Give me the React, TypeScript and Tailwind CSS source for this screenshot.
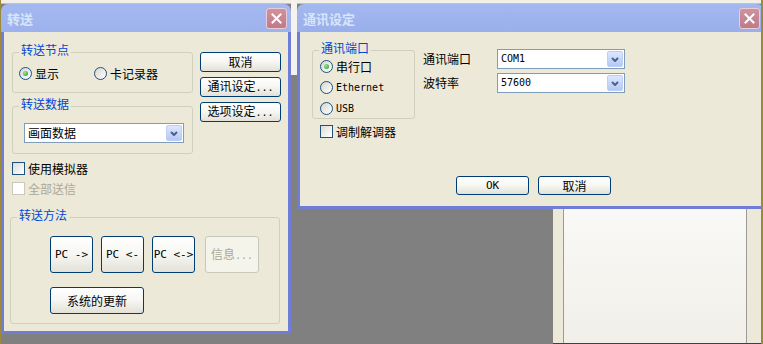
import React from "react";

const MONO = "font-[family-name:'DejaVu_Sans_Mono',monospace]";

function CloseBtn() {
  return (
    <div className="flex h-[21px] w-[21px] items-center justify-center rounded-[3px] border border-[#E9CDD6] bg-gradient-to-b from-[#D0929E] to-[#BF7A88]">
      <svg width="11" height="11" viewBox="0 0 11 11">
        <path d="M1.5 1.5 L9.5 9.5 M9.5 1.5 L1.5 9.5" stroke="white" strokeWidth="2" strokeLinecap="square" />
      </svg>
    </div>
  );
}

function Win({ title, className, children }: { title: string; className: string; children: React.ReactNode }) {
  return (
    <div className={`absolute flex flex-col overflow-hidden rounded-t-[7px] bg-gradient-to-b from-[#A4B8F0] via-[#7C97E1] to-[#7B97E1] ${className}`}>
      <div className="flex h-[28px] shrink-0 items-center justify-between pl-[6px] pr-[4px]">
        <span className="text-[13px] font-bold leading-[13px] text-[#D8E4F8]">{title}</span>
        <CloseBtn />
      </div>
      <div className="flex-1 border-x-[3px] border-b-[3px] border-[#6F7CD8] bg-[#ECE9D8]">{children}</div>
    </div>
  );
}

function Group({ label, className, children }: { label: string; className: string; children?: React.ReactNode }) {
  return (
    <div className={`relative rounded-[3px] border border-[#D0D0BF] ${className}`}>
      <span className="absolute left-[6px] top-[-9px] bg-[#ECE9D8] px-[2px] leading-[12px] text-[#0046D5]">{label}</span>
      {children}
    </div>
  );
}

function Radio({ checked, label, mono }: { checked?: boolean; label: string; mono?: boolean }) {
  return (
    <div className="flex h-[13px] items-center">
      <div className="flex h-[13px] w-[13px] items-center justify-center rounded-full border border-[#1C5180] bg-gradient-to-br from-[#D6D6D0] to-white">
        {checked && <div className="h-[5px] w-[5px] rounded-full bg-[radial-gradient(circle_at_35%_35%,#9BE59B,#1E9A1E)]" />}
      </div>
      <span className={`ml-[3px] leading-[13px] ${mono ? MONO + " text-[10px]" : ""}`}>{label}</span>
    </div>
  );
}

function Check({ label, disabled, className }: { label: string; disabled?: boolean; className: string }) {
  return (
    <div className={`flex h-[13px] items-center ${className}`}>
      <div
        className={`h-[13px] w-[13px] border ${
          disabled ? "border-[#CAC8BB] bg-white" : "border-[#1C5180] bg-gradient-to-br from-[#DCDCD7] to-white"
        }`}
      />
      <span className={`ml-[3px] leading-[13px] ${disabled ? "text-[#ACA899]" : ""}`}>{label}</span>
    </div>
  );
}

function Select({ value, className, mono }: { value: string; className: string; mono?: boolean }) {
  return (
    <div className={`flex h-[20px] items-center justify-between border border-[#7F9DB9] bg-white pl-[3px] pr-[1px] ${className}`}>
      <span className={mono ? `${MONO} text-[10px]` : ""}>{value}</span>
      <div className="flex h-[16px] w-[16px] items-center justify-center rounded-[2px] border border-[#BCCEF6] bg-gradient-to-b from-[#DDE7FD] to-[#B4C8F7]">
        <svg width="8" height="5" viewBox="0 0 8 5">
          <path d="M1 1 L4 4 L7 1" stroke="#4D6185" strokeWidth="2" fill="none" />
        </svg>
      </div>
    </div>
  );
}

function Btn({ className, children, disabled }: { className: string; children: React.ReactNode; disabled?: boolean }) {
  return (
    <div
      className={`flex items-center justify-center rounded-[3px] border leading-[12px] ${
        disabled
          ? "border-[#C9C7BA] bg-[#F5F4EA] text-[#ACA899]"
          : "border-[#003C74] bg-gradient-to-b from-white via-[#F6F6F2] to-[#E3E1D7] text-black"
      } ${className}`}
    >
      <span className="whitespace-pre">{children}</span>
    </div>
  );
}

function Dots() {
  return <span className={`${MONO} text-[10px]`}>...</span>;
}

function LeftWin() {
  return (
    <Win className="left-[1px] top-[4px] h-[330px] w-[290px]" title="转送">
      <div className="flex flex-col pl-[8px] pt-[20px]">
        <div className="flex items-start">
          <div className="flex w-[181px] flex-col">
            <Group label="转送节点" className="h-[41px]">
              <div className="flex items-center pl-[6px] pt-[14px]">
                <Radio checked label="显示" />
                <div className="ml-[35px]">
                  <Radio label="卡记录器" />
                </div>
              </div>
            </Group>
            <Group label="转送数据" className="mt-[13px] h-[48px]">
              <div className="pl-[11px] pt-[16px]">
                <Select value="画面数据" className="w-[160px]" />
              </div>
            </Group>
          </div>
          <div className="ml-[7px] flex flex-col gap-[5px]">
            <Btn className="h-[20px] w-[81px]">取消</Btn>
            <Btn className="h-[20px] w-[81px]">
              通讯设定<Dots />
            </Btn>
            <Btn className="h-[20px] w-[81px]">
              选项设定<Dots />
            </Btn>
          </div>
        </div>
        <Check className="mt-[8px]" label="使用模拟器" />
        <Check className="mt-[7px]" disabled label="全部送信" />
        <Group label="转送方法" className="ml-[-2px] mt-[22px] h-[107px] w-[270px]">
          <div className="flex flex-col pl-[39px] pt-[18px]">
            <div className="flex gap-[8px]">
              <Btn className={`h-[37px] w-[43px] ${MONO} text-[11px]`}>PC -&gt;</Btn>
              <Btn className={`h-[37px] w-[43px] ${MONO} text-[11px]`}>PC &lt;-</Btn>
              <Btn className={`h-[37px] w-[43px] ${MONO} text-[11px]`}>PC &lt;-&gt;</Btn>
              <Btn disabled className="ml-[2px] h-[37px] w-[54px]">
                信息<Dots />
              </Btn>
            </div>
            <Btn className="mt-[14px] h-[27px] w-[94px]">系统的更新</Btn>
          </div>
        </Group>
      </div>
    </Win>
  );
}

function RightWin() {
  return (
    <Win className="left-[297px] top-[4px] h-[205px] w-[467px]" title="通讯设定">
      <div className="flex flex-col pl-[12px] pt-[18px]">
        <div className="flex items-start">
          <Group label="通讯端口" className="h-[69px] w-[103px]">
            <div className="flex flex-col gap-[8px] pl-[7px] pt-[9px]">
              <Radio checked label="串行口" />
              <Radio mono label="Ethernet" />
              <Radio mono label="USB" />
            </div>
          </Group>
          <div className="ml-[8px] mt-[-1px] grid grid-cols-[74px_128px] gap-y-[4px]">
            <span className="pt-[4px] leading-[12px]">通讯端口</span>
            <Select mono value="COM1" className="w-[128px]" />
            <span className="pt-[4px] leading-[12px]">波特率</span>
            <Select mono value="57600" className="w-[128px]" />
          </div>
        </div>
        <Check className="ml-[8px] mt-[6px]" label="调制解调器" />
        <div className="ml-[144px] mt-[38px] flex gap-[9px]">
          <Btn className={`h-[19px] w-[73px] ${MONO} text-[11px]`}>OK</Btn>
          <Btn className="h-[19px] w-[73px]">取消</Btn>
        </div>
      </div>
    </Win>
  );
}

export default function App() {
  return (
    <div className="relative h-[344px] w-[763px] overflow-hidden bg-[#808080] text-[12px] leading-[12px] text-black font-[family-name:'Noto_Sans_CJK_SC',sans-serif]">
      <div className="absolute left-0 top-0 h-[4px] w-full border-b border-[#C8C4B0] bg-[#F1EFE6]" />
      <div className="absolute left-[291px] top-0 h-[75px] w-[6px] bg-[#F4F3EE]" />
      <div className="absolute left-[553px] top-[209px] flex h-[135px] w-[210px] border-b border-[#404040] bg-[#ECE9D8] pl-[10px] pr-[16px]">
        <div className="h-full flex-1 border-x border-[#9A9A9A] bg-gradient-to-b from-[#F9F9F7] to-[#F1EFE8]" />
      </div>
      <LeftWin />
      <RightWin />
      <div className="absolute left-0 top-0 h-full w-[1px] bg-[#9C8A3C]" />
      <div className="absolute right-0 top-0 h-full w-[2px] bg-[#9C8A3C]" />
    </div>
  );
}
